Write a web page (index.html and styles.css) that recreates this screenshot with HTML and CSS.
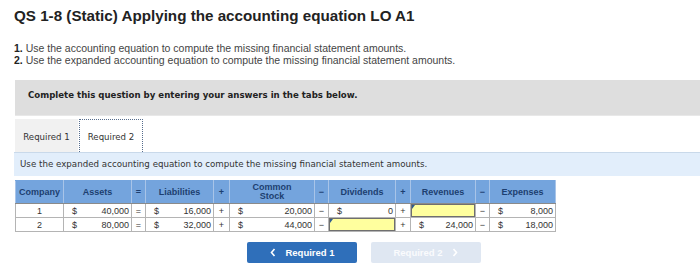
FILE: index.html
```html
<!DOCTYPE html>
<html lang="en">
<head>
    <meta charset="UTF-8">
    <title>QS 1-8 (Static) Applying the accounting equation LO A1</title>
    <link rel="stylesheet" href="styles.css">
</head>
<body>
    <h1 class="title">QS 1-8 (Static) Applying the accounting equation LO A1</h1>
    <ol class="steps">
        <li><b>1.</b> Use the accounting equation to compute the missing financial statement amounts.</li>
        <li><b>2.</b> Use the expanded accounting equation to compute the missing financial statement amounts.</li>
    </ol>

    <div class="prompt">Complete this question by entering your answers in the tabs below.</div>

    <div class="tabs">
        <span class="tab">Required 1</span>
        <span class="tab active">Required 2</span>
    </div>
    <div class="band">Use the expanded accounting equation to compute the missing financial statement amounts.</div>

    <table class="eq">
        <colgroup>
            <col style="width:48px"><col style="width:68px"><col style="width:14px"><col style="width:68px">
            <col style="width:16px"><col style="width:85px"><col style="width:14px"><col style="width:67px">
            <col style="width:15px"><col style="width:65px"><col style="width:14px"><col style="width:66px">
        </colgroup>
        <thead>
            <tr>
                <th>Company</th><th>Assets</th><th>=</th><th>Liabilities</th><th>+</th>
                <th>Common<br>Stock</th><th>&minus;</th><th>Dividends</th><th>+</th>
                <th>Revenues</th><th>&minus;</th><th>Expenses</th>
            </tr>
        </thead>
        <tbody>
            <tr>
                <td class="c">1</td>
                <td><span class="d">$</span>40,000</td>
                <td class="c">=</td>
                <td><span class="d">$</span>16,000</td>
                <td class="c">+</td>
                <td><span class="d">$</span>20,000</td>
                <td class="c">&minus;</td>
                <td><span class="d">$</span>0</td>
                <td class="c">+</td>
                <td class="input"><div class="box"></div></td>
                <td class="c">&minus;</td>
                <td><span class="d">$</span>8,000</td>
            </tr>
            <tr>
                <td class="c">2</td>
                <td><span class="d">$</span>80,000</td>
                <td class="c">=</td>
                <td><span class="d">$</span>32,000</td>
                <td class="c">+</td>
                <td><span class="d">$</span>44,000</td>
                <td class="c">&minus;</td>
                <td class="input"><div class="box"></div></td>
                <td class="c">+</td>
                <td><span class="d">$</span>24,000</td>
                <td class="c">&minus;</td>
                <td><span class="d">$</span>18,000</td>
            </tr>
        </tbody>
    </table>

    <div class="nav">
        <button class="btn">
            <svg width="8" height="9" viewBox="0 0 8 9"><path d="M5.5 1 L2.5 4.5 L5.5 8" fill="none" stroke="#fff" stroke-width="1.6"/></svg>
            Required 1
        </button>
        <button class="btn off">
            Required 2
            <svg width="8" height="9" viewBox="0 0 8 9"><path d="M2.5 1 L5.5 4.5 L2.5 8" fill="none" stroke="#fff" stroke-width="1.6"/></svg>
        </button>
    </div>
</body>
</html>
```

FILE: styles.css
```css
* {
    margin: 0;
    padding: 0;
    box-sizing: border-box;
}
body {
    font-family: 'Liberation Sans', Arial, sans-serif;
    background: #fff;
    color: #333;
    width: 700px;
}
.title {
    font-size: 15.2px;
    line-height: 18px;
    font-weight: bold;
    color: #222;
    margin: 7px 0 0 14px;
}
.steps {
    list-style: none;
    margin: 17px 0 0 14px;
    font-size: 10.5px;
    line-height: 12px;
    color: #444;
}
.steps b {
    color: #222;
}
.prompt {
    margin: 14px 0 0 15px;
    height: 36px;
    background: #dedede;
    border-bottom: 1px solid #e8e8e8;
    font-family: 'DejaVu Sans', Verdana, sans-serif;
    font-weight: bold;
    font-size: 8.6px;
    color: #222;
    padding: 10px 0 0 13px;
}
.tabs {
    display: flex;
    margin: 3px 0 0 15px;
    height: 33px;
    align-items: stretch;
}
.tab {
    font-family: 'DejaVu Sans', Verdana, sans-serif;
    font-size: 8.6px;
    color: #333;
    padding-top: 13px;
    width: 63px;
    white-space: nowrap;
    background: #f1f1f1;
    text-align: center;
}
.tab.active {
    margin-left: 1px;
    width: 64px;
    background: #fff;
    border: 1px dotted #556c8c;
    border-bottom: none;
    padding-top: 12px;
}
.band {
    margin-left: 14px;
    height: 24px;
    background: #e2eefb;
    border-top: 1px solid #c9d9ea;
    font-family: 'DejaVu Sans', Verdana, sans-serif;
    font-size: 8.7px;
    color: #333;
    padding: 6px 0 0 6px;
}
.eq {
    margin: 4px 0 0 15px;
    border-collapse: collapse;
    table-layout: fixed;
    width: 540px;
    font-size: 9px;
}
.eq th {
    background: #74a4dd;
    color: #1d3f70;
    font-weight: bold;
    height: 23px;
    line-height: 9px;
    border: 1px solid #a8c4e8;
    border-top-color: #74a4dd;
    border-bottom: 1px solid #8a8a8a;
    text-align: center;
}
.eq td {
    height: 14px;
    border: 1px solid #b4b4b4;
    text-align: right;
    padding: 0 2px 0 4px;
    color: #333;
    white-space: nowrap;
}
.eq td.c {
    text-align: center;
    padding: 0;
}
.eq .d {
    float: left;
    padding-left: 4px;
}
.eq td.input {
    padding: 0;
}
.box {
    position: relative;
    height: 13px;
    background: #ffff9e;
    border: 1px solid #6f6f6f;
}
.box::before {
    content: "";
    position: absolute;
    top: 0;
    left: 0;
    border-top: 4px solid #2f5b8f;
    border-right: 3px solid transparent;
}
.nav {
    display: flex;
    gap: 14px;
    margin: 10px 0 0 247px;
}
.btn {
    width: 110px;
    height: 21px;
    border: none;
    border-radius: 2px;
    background: #2f6fba;
    color: #fff;
    font-family: 'Liberation Sans', Arial, sans-serif;
    font-weight: bold;
    font-size: 9.5px;
    display: flex;
    align-items: center;
    justify-content: center;
    gap: 8px;
}
.btn.off {
    background: #dfe7f2;
    color: #fafbfd;
}
```
